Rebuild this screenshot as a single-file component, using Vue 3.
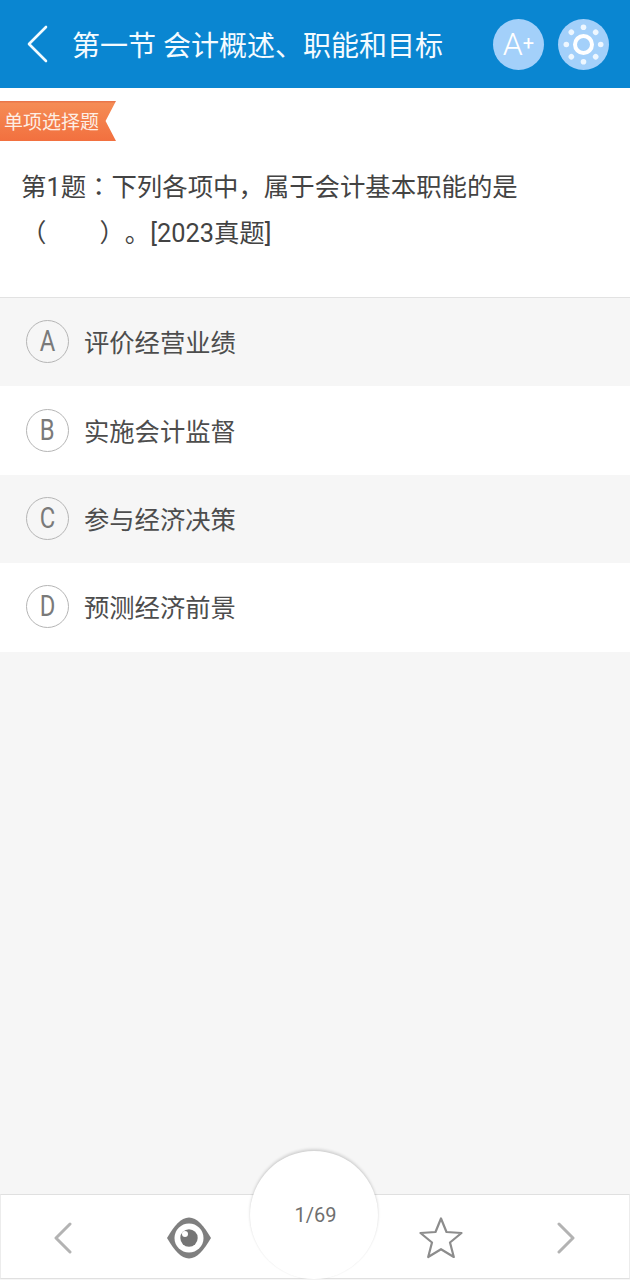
<script setup>
const options = [
  { key: 'A', text: '评价经营业绩' },
  { key: 'B', text: '实施会计监督' },
  { key: 'C', text: '参与经济决策' },
  { key: 'D', text: '预测经济前景' },
]
const dots = [0, 45, 90, 135, 180, 225, 270, 315]
</script>

<template>
  <div class="page">
    <header class="topbar">
      <svg class="back" width="24" height="38" viewBox="0 0 24 38">
        <path d="M20 2 L3 19 L20 36" fill="none" stroke="#f2fbff" stroke-width="2.600" stroke-linecap="round" stroke-linejoin="round" />
      </svg>
      <h1 class="title">第一节 会计概述、职能和目标</h1>
      <div class="round-btn">
        <span class="a-big">A</span><span class="a-plus">+</span>
      </div>
      <div class="round-btn">
        <svg width="51" height="51" viewBox="0 0 51 51">
          <circle cx="25.500" cy="25.500" r="8.500" fill="none" stroke="#fff" stroke-width="4" />
          <circle v-for="d in dots" :key="d" cx="25.500" cy="8.300" r="2.800" fill="#eef7ff" :transform="`rotate(${d} 25.500 25.500)`" />
        </svg>
      </div>
    </header>

    <section class="question">
      <div class="tag">单项选择题</div>
      <p class="stem">第1题<span class="tc">：</span>下列各项中，属于会计基本职能的是<br />（<span class="blank"></span>）。[2023真题]</p>
    </section>

    <ul class="options">
      <li v-for="o in options" :key="o.key" class="option">
        <span class="letter"><span class="glyph">{{ o.key }}</span></span>
        <span class="opt-text">{{ o.text }}</span>
      </li>
    </ul>

    <div class="spacer"></div>

    <footer class="bottombar">
      <svg class="nav-arrow prev" width="20" height="32" viewBox="0 0 20 32">
        <path d="M17 2 L3 16 L17 30" fill="none" stroke="#b3b3b3" stroke-width="3" stroke-linecap="round" stroke-linejoin="round" />
      </svg>
      <svg class="eye" width="46" height="42" viewBox="0 0 46 42">
        <path d="M1 21 C8 9 15 0.500 23 0.500 C31 0.500 38 9 45 21 C38 33 31 41.500 23 41.500 C15 41.500 8 33 1 21 Z" fill="#7f7f7f" />
        <circle cx="23" cy="21" r="14.500" fill="#fff" />
        <circle cx="23" cy="21" r="8.700" fill="#757575" />
        <circle cx="19" cy="17" r="3" fill="#fff" />
      </svg>
      <div class="counter">1/69</div>
      <svg class="star" width="44" height="42" viewBox="0 0 44 42">
        <path d="M22 1.500 L27.500 15 L42.500 16 L31 25.500 L34.800 40 L22 32.200 L9.200 40 L13 25.500 L1.500 16 L16.500 15 Z" fill="none" stroke="#8c8c8c" stroke-width="2.200" stroke-linejoin="round" />
      </svg>
      <svg class="nav-arrow" width="20" height="32" viewBox="0 0 20 32">
        <path d="M3 2 L17 16 L3 30" fill="none" stroke="#b3b3b3" stroke-width="3" stroke-linecap="round" stroke-linejoin="round" />
      </svg>
    </footer>
  </div>
</template>

<style>
html, body { margin: 0; padding: 0; background: #f6f6f6; }
</style>

<style scoped>
.page {
  width: 630px;
  height: 1280px;
  display: flex;
  flex-direction: column;
  background: #f6f6f6;
  font-family: Roboto, "Noto Sans CJK SC", sans-serif;
  overflow: hidden;
}
.topbar {
  height: 88px;
  flex: none;
  background: #0a86d1;
  display: flex;
  align-items: center;
  padding: 0 21px 0 26px;
  box-sizing: border-box;
  color: #fff;
}
.back { flex: none; }
.title {
  flex: 1;
  margin: 0 0 0 22px;
  font-size: 28px;
  font-weight: 400;
  white-space: nowrap;
  color: #f4fbff;
}
.round-btn {
  width: 51px;
  height: 51px;
  border-radius: 50%;
  background: #a3d0fa;
  flex: none;
  margin-left: 14px;
  display: flex;
  align-items: center;
  justify-content: center;
  color: #fff;
}
.a-big { font-size: 32px; font-weight: 300; line-height: 1; }
.a-plus { font-size: 20px; font-weight: 400; line-height: 1; margin-top: -3px; }
.question {
  background: #fff;
  height: 210px;
  flex: none;
  box-sizing: border-box;
  padding-top: 13px;
  border-bottom: 1px solid #e2e2e2;
}
.tag {
  width: 116px;
  height: 40px;
  box-sizing: border-box;
  background: linear-gradient(#e9764a 0, #e9764a 1px, #f58c55 2px, #f2703f 100%);
  color: #fdeee4;
  font-size: 19px;
  line-height: 44px;
  padding-left: 4px;
  white-space: nowrap;
  overflow: hidden;
  clip-path: polygon(0 0, 100% 0, 91% 50%, 100% 100%, 0 100%);
}
.stem {
  margin: 23px 0 0;
  padding-left: 21px;
  font-size: 25.400px;
  line-height: 46px;
  color: #434343;
  white-space: nowrap;
  text-spacing-trim: space-all;
}
.tc { font-family: "Noto Sans CJK TC", sans-serif; line-height: 1; }
.blank { display: inline-block; width: 53px; }
.options {
  list-style: none;
  margin: 0;
  padding: 0;
  flex: none;
}
.option {
  height: 88.400px;
  display: flex;
  align-items: center;
  padding-left: 26px;
  background: #fff;
}
.option:nth-child(odd) { background: #f6f6f6; }
.letter {
  width: 43px;
  height: 43px;
  box-sizing: border-box;
  border: 1px solid #b5b5b5;
  border-radius: 50%;
  margin-bottom: 1px;
  display: flex;
  align-items: center;
  justify-content: center;
  color: #7a7a7a;
  flex: none;
}
.glyph {
  display: inline-block;
  font-size: 29px;
  line-height: 1;
  transform: scaleX(0.82);
}
.opt-text {
  margin-left: 15px;
  margin-bottom: 2px;
  font-size: 25.300px;
  color: #4d4d4d;
  white-space: nowrap;
}
.spacer { flex: 1; }
.bottombar {
  height: 85px;
  flex: none;
  margin-bottom: 1px;
  padding-top: 2px;
  background: #fff;
  border: 1px solid #e0e0e0;
  border-right-color: #ececec;
  border-left-color: #ececec;
  box-sizing: border-box;
  position: relative;
  display: grid;
  grid-template-columns: repeat(5, 1fr);
  align-items: center;
  justify-items: center;
}
.prev { margin-right: 2px; }
.counter {
  position: absolute;
  left: 249px;
  top: -44px;
  width: 128px;
  height: 128px;
  box-sizing: border-box;
  border-radius: 50%;
  background: #fff;
  box-shadow: 0 -2px 3px rgba(0, 0, 0, 0.14), 0 0 2px rgba(0, 0, 0, 0.06);
  text-align: center;
  padding-top: 50px;
  text-indent: 3px;
  font-size: 20px;
  line-height: 28px;
  color: #6f6f6f;
}
.star { grid-column: 4; }
</style>
